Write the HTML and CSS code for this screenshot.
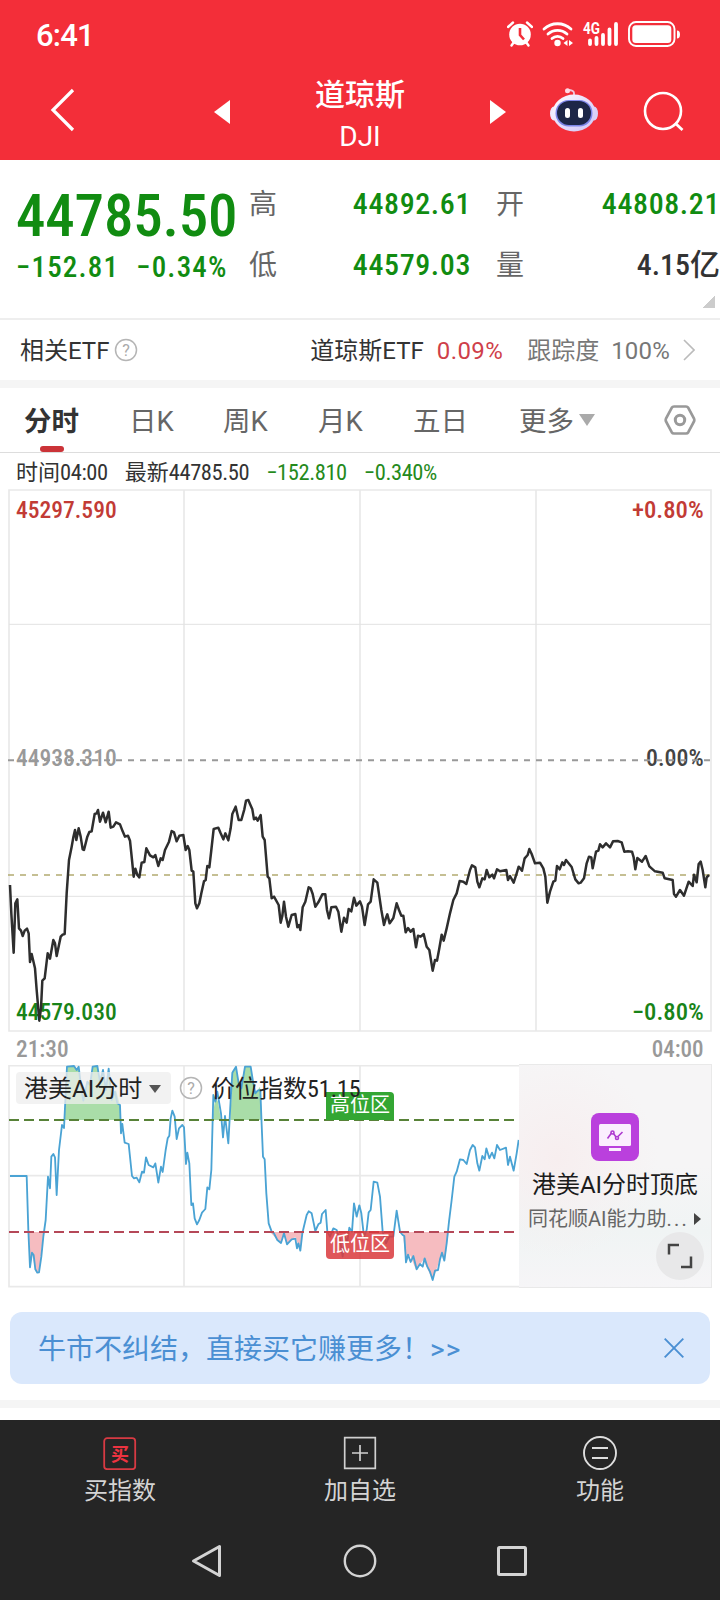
FILE: index.html
```
<!DOCTYPE html>
<html lang="zh-CN">
  <head>
    <meta charset="utf-8">
    <meta name="viewport" content="width=device-width, initial-scale=1.0">
    <title>道琼斯 DJI</title>
    <link rel="stylesheet" href="styles.css">
  </head>
  <body>
    <header>
      <div class="status">
        <span class="clock">6:41</span>
        <div class="status-icons">
          <!-- alarm -->
          <svg class="i-alarm" viewBox="0 0 26 26">
            <path d="M1 6 6 1.500M25 6 20 1.500M4.500 24.500 7 21M21.500 24.500 19 21" fill="none" stroke="#fff" stroke-width="2.400" stroke-linecap="round"/>
            <circle cx="13" cy="13.500" r="10.800" fill="#fff"/>
            <path d="M13 7v7l4 4.500" fill="none" stroke="#f32e39" stroke-width="2.600"/>
          </svg>
          <!-- wifi -->
          <svg class="i-wifi" viewBox="0 0 32 26">
            <g fill="none" stroke="#fff" stroke-width="2.800" stroke-linecap="round">
              <path d="M2 8a20 20 0 0 1 27 0"/>
              <path d="M6 13a14 14 0 0 1 19 0"/>
              <path d="M10 17.500a8 8 0 0 1 11 0"/>
            </g>
            <circle cx="15.500" cy="22" r="3.200" fill="#fff"/>
            <path d="M25.500 19v6l-4-3zM27 19v6l4-3z" fill="#fff"/>
          </svg>
          <!-- signal -->
          <svg class="i-signal" viewBox="0 0 36 26">
            <text class="net" x="0" y="12.500" textLength="17" lengthAdjust="spacingAndGlyphs">4G</text>
            <path d="M7 19.500V23M13.500 17V23M20 14V23M26.500 8.500V23M33 3V23" stroke="#fff" stroke-width="3.800" stroke-linecap="round"/>
          </svg>
          <!-- battery -->
          <svg class="i-battery" viewBox="0 0 52 26">
            <rect x="1" y="1" width="45.500" height="24" rx="7" fill="none" stroke="#fff" stroke-width="1.900"/>
            <rect x="4.300" y="4.200" width="39" height="17.700" rx="3.500" fill="#fff"/>
            <path d="M49 9.500q3 0 3 4t-3 4z" fill="#fff"/>
          </svg>
        </div>
      </div>
      <nav class="topbar">
        <svg class="back" viewBox="0 0 26 44"><path d="M23 2 3 22 23 42" fill="none" stroke="#fff" stroke-width="3.200"/></svg>
        <svg class="prev" viewBox="0 0 16 24"><path d="M16 0v24L0 12z" fill="#fff"/></svg>
        <div class="title"><b>道琼斯</b><span>DJI</span></div>
        <svg class="next" viewBox="0 0 16 24"><path d="M0 0v24l16-12z" fill="#fff"/></svg>
        <!-- assistant robot -->
        <svg class="robot" viewBox="0 0 48 44">
          <defs>
            <linearGradient id="shell" x1="0" y1="0" x2="1" y2="1">
              <stop offset="0" stop-color="#fff"/><stop offset=".5" stop-color="#e6dcfb"/><stop offset="1" stop-color="#cfc6f6"/>
            </linearGradient>
          </defs>
          <path d="M24 8V5q0-3-6-3" fill="none" stroke="#f0c6dc" stroke-width="1.800"/>
          <circle cx="17.500" cy="2.800" r="2.500" fill="#ffd9e4"/>
          <ellipse cx="4" cy="25.500" rx="4" ry="7" fill="#eee9fd"/>
          <ellipse cx="44" cy="25.500" rx="4" ry="7" fill="#d9d2f8"/>
          <ellipse cx="24" cy="25" rx="21.500" ry="18.500" fill="url(#shell)"/>
          <rect x="5.500" y="12" width="37" height="26.500" rx="13" fill="#7d86e8"/>
          <rect x="7" y="13" width="34" height="24" rx="12" fill="#1d2647"/>
          <rect x="15" y="20" width="5" height="10" rx="2.500" fill="#fff"/>
          <rect x="28" y="20" width="5" height="10" rx="2.500" fill="#fff"/>
        </svg>
        <svg class="search" viewBox="0 0 42 42"><circle cx="20" cy="20" r="18" fill="none" stroke="#fff" stroke-width="2.600"/><path d="m32 32 7.500 7" stroke="#fff" stroke-width="2.800"/></svg>
      </nav>
    </header>

    <section class="quote">
      <div class="last">
        <div class="price num">44785.50</div>
        <div class="change num"><span>−152.81</span><span>−0.34%</span></div>
      </div>
      <dl>
        <dt>高</dt><dd class="num">44892.61</dd>
        <dt>开</dt><dd class="num">44808.21</dd>
        <dt>低</dt><dd class="num">44579.03</dd>
        <dt>量</dt><dd class="num dark">4.15亿</dd>
      </dl>
      <i class="corner"></i>
    </section>

    <section class="etf">
      <span>相关ETF</span>
      <svg class="help" viewBox="0 0 24 24"><circle cx="12" cy="12" r="10.500"/><text x="12" y="17.500">?</text></svg>
      <span class="etf-name">道琼斯ETF</span>
      <span class="etf-pct">0.09%</span>
      <span class="etf-track">跟踪度</span>
      <span class="etf-full">100%</span>
      <svg class="chev" viewBox="0 0 12 22"><path d="m1 1 10 10L1 21" fill="none" stroke="#bbb" stroke-width="1.600"/></svg>
    </section>

    <nav class="tabs">
      <a class="on">分时</a>
      <a>日K</a>
      <a>周K</a>
      <a>月K</a>
      <a>五日</a>
      <a>更多<i class="caret"></i></a>
      <svg class="gear" viewBox="0 0 32 30">
        <path d="M10 1.500h12q1.500 0 2.300 1.300l5.600 10.500q.8 1.700 0 3.400l-5.600 10.500q-.8 1.300-2.300 1.300H10q-1.500 0-2.300-1.300L2.100 16.700q-.8-1.700 0-3.400L7.700 2.800Q8.500 1.500 10 1.500z" fill="none" stroke="#999" stroke-width="2.700"/>
        <circle cx="16" cy="15" r="4.700" fill="none" stroke="#999" stroke-width="3"/>
      </svg>
    </nav>

    <div class="ticker">
      <span>时间<span class="num">04:00</span></span>
      <span>最新<span class="num">44785.50</span></span>
      <span class="num green">−152.810</span>
      <span class="num green">−0.340%</span>
    </div>

    <!-- intraday chart, 3 units per px -->
    <svg class="chart" viewBox="0 0 2160 1740">
      <g class="grid">
        <path d="M27 15H2133V1638H27zM552 15V1638M1080 15V1638M1608 15V1638"/>
        <path class="thin" d="M27 418H2133M27 1234H2133"/>
      </g>
      <text class="lbl gray" x="48" y="842" textLength="302" lengthAdjust="spacingAndGlyphs">44938.310</text>
      <text class="lbl mid" x="1938" y="842" textLength="173" lengthAdjust="spacingAndGlyphs">0.00%</text>
      <path d="M24 826H2133" stroke="#999" stroke-width="6" stroke-dasharray="18 18"/>
      <path d="M24 1170H2133" stroke="#b3ab70" stroke-width="5" stroke-dasharray="18 18"/>
      <text class="lbl red" x="48" y="99" textLength="302" lengthAdjust="spacingAndGlyphs">45297.590</text>
      <text class="lbl red" x="1896" y="99" textLength="215" lengthAdjust="spacingAndGlyphs">+0.80%</text>
      <text class="lbl green" x="48" y="1604" textLength="302" lengthAdjust="spacingAndGlyphs">44579.030</text>
      <text class="lbl green" x="1896" y="1604" textLength="215" lengthAdjust="spacingAndGlyphs">−0.80%</text>
      <text class="lbl gray" x="48" y="1716" textLength="158" lengthAdjust="spacingAndGlyphs">21:30</text>
      <text class="lbl gray" x="1955" y="1716" textLength="156" lengthAdjust="spacingAndGlyphs">04:00</text>
      <polyline class="line" transform="translate(0 855)" points="30,345 34,430 41,548 46,400 52,388 57,475 63,482 68,498 74,482 81,476 86,490 90,576 95,552 105,595 110,660 118,752 123,715 127,632 134,625 143,550 150,566 160,510 165,520 170,558 182,500 188,494 194,492 200,370 207,270 215,230 220,202 225,180 229,210 236,175 242,200 248,238 252,240 262,200 268,186 275,184 284,132 290,130 294,120 300,155 309,128 317,157 326,125 332,173 340,170 348,157 360,163 368,184 375,200 384,197 390,212 396,270 401,320 406,296 412,315 418,322 425,278 433,276 439,235 450,256 460,262 466,255 475,288 482,265 488,270 495,240 507,215 515,183 522,187 530,214 538,197 550,195 557,240 563,228 568,240 575,302 580,305 586,400 591,415 598,400 604,370 612,334 617,330 622,288 628,292 634,240 641,177 655,173 662,190 670,208 676,190 685,211 692,175 697,132 707,110 716,150 724,150 733,118 738,92 745,90 750,102 757,118 762,148 768,143 773,152 782,135 788,200 794,210 803,320 808,325 815,385 822,380 836,405 842,458 847,438 852,395 858,440 865,470 875,435 886,432 892,472 897,465 901,480 908,412 916,395 926,352 932,355 938,372 946,410 955,397 967,373 976,373 981,420 987,445 994,412 1008,410 1015,425 1024,485 1032,443 1040,458 1046,417 1054,424 1062,383 1069,407 1080,394 1086,410 1094,465 1104,403 1112,395 1121,328 1132,338 1144,420 1152,465 1158,443 1162,433 1169,460 1180,444 1190,400 1197,420 1204,437 1210,437 1217,487 1224,474 1232,485 1240,477 1248,532 1254,497 1262,500 1271,492 1280,530 1288,540 1298,602 1305,570 1311,572 1318,535 1325,494 1331,512 1340,475 1350,430 1360,390 1370,370 1379,333 1390,335 1399,342 1410,300 1416,286 1426,292 1432,335 1438,352 1447,325 1454,328 1460,300 1468,322 1477,314 1482,325 1491,298 1500,304 1519,300 1524,330 1530,318 1541,338 1550,310 1556,290 1566,302 1574,265 1583,255 1588,237 1595,252 1605,280 1620,278 1630,295 1636,320 1642,398 1650,365 1660,335 1666,332 1671,288 1679,298 1687,277 1692,285 1698,270 1715,291 1726,328 1736,340 1742,338 1752,325 1760,280 1767,260 1774,262 1778,295 1788,245 1795,242 1800,223 1808,232 1818,220 1830,232 1839,214 1853,213 1865,217 1873,245 1884,244 1896,245 1901,262 1906,298 1912,264 1926,275 1937,258 1948,289 1965,304 1988,308 1994,325 2018,330 2022,372 2028,380 2040,360 2052,377 2066,335 2078,348 2082,314 2090,337 2096,282 2102,275 2108,300 2116,352 2120,322 2127,315"/>
    </svg>

    <section class="indicator">
      <div class="ind-chart">
        <svg viewBox="0 0 1557 681">
          <g class="grid" transform="translate(0 -15)">
            <path d="M1557 17H27V680H1557M27 347H1557M552 17V680M1080 17V680"/>
          </g>
          <g transform="translate(0 -45)">
            <g fill="#a9dda8">
              <path d="M192 210 203 48H222L230 60 236 48 250 150 262 95 272 100 280 48H292L300 90 308 60 318 110 326 65 336 140 348 120 360 165V210z"/>
              <path d="M637 210 646 140 654 155 663 210zM691 210 698 62 708 50 720 120 735 48H752L766 130 780 110 786 210z"/>
            </g>
            <g fill="#f6bcc0">
              <path d="M87 546 90 650 96 608 104 650 112 668 119 655 130 546z"/>
              <path d="M810 546 840 578 852 552 862 582 886 560 900 600 907 546z"/>
              <path d="M1208 546 1218 636 1230 615 1248 660 1270 630 1298 690 1326 610 1335 630 1346 546z"/>
            </g>
            <polyline class="osc" points="30,378 80,378 85,540 90,652 96,608 101,615 106,658 112,668 117,667 124,620 130,560 137,510 144,380 150,415 154,320 160,312 165,322 170,435 177,300 186,225 192,234 198,110 201,50 222,48 230,60 236,50 243,110 250,152 262,95 270,105 278,50 292,48 300,95 309,60 318,120 326,56 335,150 345,125 352,160 360,165 363,250 367,222 374,278 386,282 396,378 402,385 410,383 418,397 426,365 432,368 438,322 446,345 460,352 466,340 475,398 483,350 488,366 497,300 503,265 508,257 512,205 517,182 524,200 530,267 537,235 547,225 552,232 558,342 562,308 568,340 574,465 579,460 584,505 591,523 598,510 606,488 616,477 622,412 628,418 634,360 640,135 646,155 652,125 663,190 669,262 675,198 685,280 692,150 697,68 708,50 716,100 724,115 735,50 752,50 760,100 766,130 773,122 781,120 785,225 789,320 794,328 799,430 806,520 815,545 822,550 832,570 843,579 852,550 861,583 875,568 886,566 891,595 895,580 901,602 907,550 920,495 926,484 935,490 946,543 955,523 962,518 966,492 977,480 982,545 990,560 1000,535 1010,540 1020,570 1028,620 1034,560 1042,575 1048,533 1056,545 1062,460 1070,500 1078,466 1084,490 1092,560 1100,540 1106,487 1112,480 1121,395 1132,398 1140,440 1148,545 1158,580 1168,560 1180,560 1190,482 1200,545 1208,555 1213,558 1218,637 1224,614 1232,636 1240,618 1250,658 1260,642 1268,650 1274,625 1282,650 1290,665 1298,690 1305,662 1314,660 1320,628 1326,608 1333,632 1340,580 1347,515 1355,450 1363,380 1370,365 1380,328 1390,330 1400,342 1410,300 1418,285 1425,292 1432,340 1438,362 1447,318 1454,328 1459,295 1468,325 1476,308 1483,325 1491,285 1500,300 1518,293 1524,345 1530,320 1541,362 1550,310 1556,270"/>
            <path d="M27 210H1545" stroke="#588238" stroke-width="6" stroke-dasharray="30 15"/>
            <path d="M27 546H1545" stroke="#b54858" stroke-width="6" stroke-dasharray="30 15"/>
            <path d="M978 126H1170q12 0 12 12V210H978z" fill="#33a633"/>
            <path d="M978 543H1182V615q0 12-12 12H990q-12 0-12-12z" fill="#d9383c" fill-opacity=".85"/>
            <text class="zone" x="990" y="186" textLength="180">高位区</text>
            <text class="zone" x="990" y="603" textLength="180">低位区</text>
          </g>
        </svg>
        <div class="ind-bar">
          <span class="picker">港美AI分时<i></i></span>
          <svg class="help" viewBox="0 0 24 24"><circle cx="12" cy="12" r="10.500"/><text x="12" y="17.500">?</text></svg>
          <span class="ind-name">价位指数<span class="num">51.15</span></span>
        </div>
      </div>
      <aside class="promo">
        <svg class="promo-icon" viewBox="0 0 48 48">
          <rect width="48" height="48" rx="8" fill="#ba40dd"/>
          <rect x="8" y="11" width="32" height="22" rx="1.500" fill="#fbeefe"/>
          <g fill="none" stroke="#ae3bd0" stroke-width="1.600">
            <path d="M16.500 25.500 20.500 20M22.500 20.500 25 24M27 23.500 31.500 19"/>
            <circle cx="21.500" cy="19.500" r="1.500"/><circle cx="26" cy="25" r="1.500"/>
          </g>
          <path d="M18 35h12v3H18z" fill="#fbeefe"/>
        </svg>
        <b>港美AI分时顶底</b>
        <p>同花顺AI能力助<span class="dots">...</span><i></i></p>
        <span class="expand"><svg viewBox="0 0 26 26"><path d="M2 11.500V2H12M24 13.500V24H14" fill="none" stroke="#444" stroke-width="2.500"/></svg></span>
      </aside>
    </section>

    <div class="banner">
      <span>牛市不纠结，直接买它赚更多！<span class="more">&gt;&gt;</span></span>
      <svg viewBox="0 0 20 20"><path d="M.7.700 19.300 19.300M19.300.700.700 19.300" stroke="#4a8fd3" stroke-width="1.900"/></svg>
    </div>
    <div class="sep"></div>

    <footer>
      <div class="actions">
        <a>
          <svg viewBox="0 0 34 34"><rect x="1.200" y="2.200" width="31" height="31" rx="3" fill="none" stroke="#d73a43" stroke-width="1.800"/><text class="buy" x="17" y="24.500">买</text></svg>
          <span>买指数</span>
        </a>
        <a>
          <svg viewBox="0 0 34 34"><path d="M1.700 1.700H32.300V32.300H1.700zM17 9V25M9 17H25" fill="none" stroke="#d0d0d0" stroke-width="1.700"/></svg>
          <span>加自选</span>
        </a>
        <a>
          <svg viewBox="0 0 34 34"><circle cx="17" cy="17" r="16" fill="none" stroke="#ddd" stroke-width="1.900"/><path d="M9 12H25M9 22H25" stroke="#ddd" stroke-width="1.900"/></svg>
          <span>功能</span>
        </a>
      </div>
      <div class="sysnav">
        <svg viewBox="0 0 34 34"><path d="M28.500 2.500v29L2.500 17z" fill="none" stroke="#d4d4d4" stroke-width="3" stroke-linejoin="round"/></svg>
        <svg viewBox="0 0 34 34"><circle cx="17" cy="17" r="15.200" fill="none" stroke="#d4d4d4" stroke-width="2.400"/></svg>
        <svg viewBox="0 0 34 34"><rect x="3.500" y="3.500" width="27" height="27" rx="1" fill="none" stroke="#d4d4d4" stroke-width="3"/></svg>
      </div>
    </footer>
  </body>
</html>
```
FILE: styles.css
```
* { box-sizing: border-box; }

body {
    margin: 0;
    width: 720px;
    background: #fff;
    color: #333;
    font-family: Roboto, "Noto Sans CJK SC", sans-serif;
    font-size: 24px;
    line-height: 1;
}

svg { display: block; flex: none; }
.num { font-stretch: 85%; }
.green { color: #258a1c; fill: #188418; }
.red { fill: #c23b35; }
.gray { fill: #999; }
.mid { fill: #444; }

/* header */
header { height: 160px; background: #f32e39; color: #fff; }
.status { display: flex; justify-content: space-between; height: 69px; padding: 21px 40px 0 36px; }
.clock { font-size: 31px; font-weight: 500; line-height: 29px; letter-spacing: -0.8px; }
.status-icons { display: flex; }
.i-alarm { width: 26px; height: 26px; }
.i-wifi { width: 32px; height: 26px; margin-left: 9px; }
.i-signal { width: 36px; height: 26px; margin-left: 9px; overflow: visible; }
.i-battery { width: 52px; height: 26px; margin-left: 9px; }
.net { font-size: 16px; font-weight: 700; fill: #fff; }

.topbar { display: flex; align-items: flex-start; padding-left: 50px; }
.back { width: 26px; height: 44px; margin-top: 19px; }
.prev { width: 16px; height: 24px; margin: 31px 0 0 138px; }
.title { width: 90px; margin: 8px 85px 0; display: flex; flex-direction: column; align-items: center; white-space: nowrap; }
.title b { font-size: 30px; font-weight: 500; line-height: 36px; }
.title span { font-size: 28px; line-height: 30px; margin-top: 9px; }
.next { width: 16px; height: 24px; margin-top: 31px; }
.robot { width: 48px; height: 44px; margin: 19px 0 0 44px; }
.search { width: 42px; height: 42px; margin: 22px 0 0 45px; }

/* quote */
.quote { position: relative; display: flex; height: 160px; border-bottom: 2px solid #eee; color: #118c11; }
.last { width: 249px; padding: 26px 0 0 16px; white-space: nowrap; }
.price { font-size: 59px; line-height: 60px; font-weight: 500; letter-spacing: -0.2px; }
.change { display: flex; gap: 17px; font-size: 29px; line-height: 43px; font-weight: 500; letter-spacing: 1.2px; }
.quote dl { display: grid; grid-template-columns: 28px 194px 55px 194px; grid-auto-rows: 61px; align-items: center; margin: 14px 0 0; font-size: 30px; }
.quote dt { color: #666; font-size: 28px; }
.quote dt:nth-of-type(even) { padding-left: 25px; }
.quote dd { margin: 0; padding-bottom: 2px; text-align: right; font-weight: 500; letter-spacing: 0.6px; }
.quote .dark { color: #333; letter-spacing: 0; }
.corner { position: absolute; right: 5px; bottom: 10px; width: 12px; height: 12px; background: linear-gradient(135deg, transparent 50%, #ccc 50%); }

/* etf */
.etf { display: flex; align-items: center; height: 68px; padding: 0 25px 0 20px; border-bottom: 8px solid #f5f5f5; white-space: nowrap; }
.etf span { padding-top: 2px; }
.help { width: 24px; height: 24px; }
.help circle { fill: none; stroke: #b5b5b5; stroke-width: 1.5; }
.help text { fill: #aaa; font-size: 16px; text-anchor: middle; }
.etf .help { margin-left: 5px; }
.etf-name { margin-left: auto; }
.etf-pct { margin-left: 13px; color: #cf3f4a; letter-spacing: 0.4px; }
.etf-track { margin-left: 24px; color: #777; }
.etf-full { margin-left: 12px; color: #777; letter-spacing: 0.2px; }
.chev { width: 12px; height: 22px; margin-left: 13px; }

/* tabs */
.tabs { display: grid; grid-template-columns: 105px 94px 95px 95px 106px 145px auto; align-items: center; height: 65px; padding-left: 24px; border-bottom: 1px solid #ddd; font-size: 27.500px; color: #666; }
.tabs a { position: relative; height: 64px; line-height: 67px; }
.tabs .on { color: #333; font-weight: 700; }
.tabs .on::after { content: ""; position: absolute; left: 16px; bottom: 0; width: 24px; height: 6px; border-radius: 3px; background: #cb3338; }
.caret { display: inline-block; margin-left: 5px; border: 8px solid transparent; border-top: 12px solid #aaa; border-bottom: 0; vertical-align: 5px; }
.gear { width: 32px; height: 30px; }

.ticker { display: flex; height: 32px; padding-left: 16px; font-size: 22px; line-height: 38px; white-space: nowrap; }
.ticker .num { font-size: 22.500px; letter-spacing: -0.4px; }
.ticker > span + span { margin-left: 17px; }

/* charts */
.chart { width: 720px; height: 580px; }
.grid path { fill: none; stroke: #e9e9e9; stroke-width: 5; }
.grid .thin { stroke: #e2e2e2; stroke-width: 3; }
.lbl { font-size: 70px; font-weight: 500; font-stretch: 85%; }
.line { fill: none; stroke: #2e2e2e; stroke-width: 7.5; stroke-linejoin: round; }
.osc { fill: none; stroke: #4aa3d4; stroke-width: 5.5; stroke-linejoin: round; }
.zone { font-size: 60px; fill: #fff; }

.indicator { display: flex; height: 227px; }
.ind-chart { position: relative; width: 519px; }
.ind-chart > svg { width: 519px; height: 227px; }
.ind-bar { position: absolute; left: 16px; top: 7px; display: flex; align-items: center; white-space: nowrap; color: #222; }
.picker { display: flex; align-items: center; width: 155px; height: 32px; padding: 2px 0 0 8px; border-radius: 4px; background: rgba(238, 238, 238, .75); }
.picker i { margin-left: 7px; border: 6.5px solid transparent; border-top: 8px solid #555; border-bottom: 0; }
.ind-bar .help { margin: 0 8px; }
.ind-name { padding-top: 2px; }
.promo { position: relative; display: flex; flex-direction: column; align-items: center; width: 193px; height: 224px; margin-top: -1px; border: solid #e9e9e9; border-width: 1px 1px 1px 0; background: radial-gradient(circle at 20% 42%, #f7eeef, transparent 50%), linear-gradient(#f6f5f6 45%, #f0f4f4 75%, #f6f5f7); white-space: nowrap; }
.promo-icon { width: 48px; height: 48px; margin-top: 48px; }
.promo b { margin-top: 11px; font-weight: 400; color: #1c1c1c; line-height: 26px; }
.promo p { display: flex; align-items: center; align-self: flex-start; margin: 7px 0 0 9px; font-size: 20px; line-height: 28px; color: #666; }
.promo p i { margin-left: 5px; border: 6px solid transparent; border-left: 7px solid #444; border-right: 0; }
.dots { letter-spacing: 2.2px; }
.expand { position: absolute; right: 7px; bottom: 7px; display: grid; place-items: center; width: 48px; height: 48px; border-radius: 50%; background: #e8e8e9; }
.expand svg { width: 26px; height: 26px; }

/* banner */
.banner { display: flex; align-items: center; justify-content: space-between; height: 72px; margin: 20px 10px 0; padding: 0 26px 0 28px; border-radius: 12px; background: #dae8fc; color: #4a8fd3; font-size: 28px; }
.banner > span { padding-top: 3px; }
.more { letter-spacing: 1px; }
.banner svg { width: 20px; height: 20px; }
.sep { height: 8px; margin: 16px 0 12px; background: #f5f5f5; }

/* bottom */
footer { height: 180px; background: #252525; color: #d4d4d4; }
.actions { display: flex; height: 102px; padding-top: 16px; }
.actions a { display: flex; flex-direction: column; align-items: center; flex: 1; line-height: 42px; }
.actions svg { width: 34px; height: 34px; }
.buy { font-size: 18px; font-weight: 700; fill: #ee3340; text-anchor: middle; }
.sysnav { display: flex; justify-content: center; gap: 118px; padding-top: 22px; }
.sysnav svg { width: 34px; height: 34px; }
```
